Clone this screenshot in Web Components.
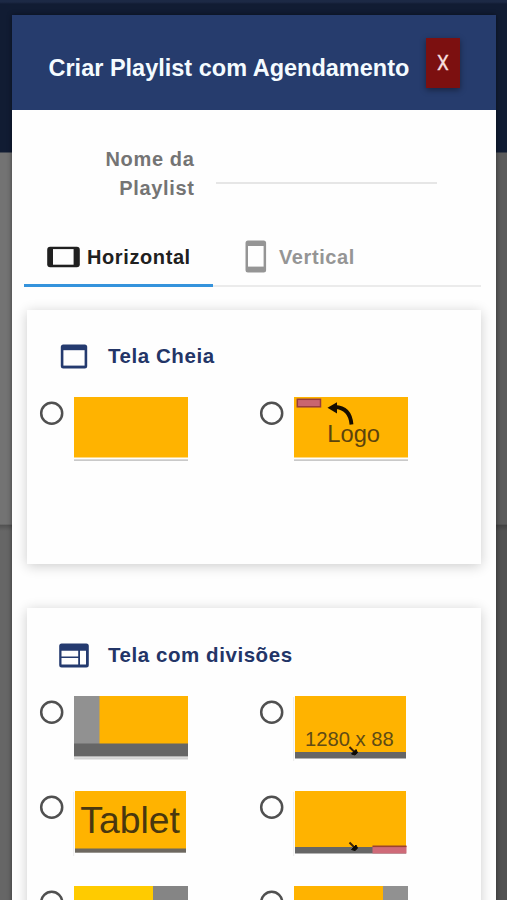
<!DOCTYPE html>
<html lang="pt-BR">
<head>
<meta charset="utf-8">
<title>Criar Playlist</title>
<style>
html,body{margin:0;height:900px;overflow:hidden;font-family:"Liberation Sans",Arial,sans-serif}
</style>
</head>
<body>
<playlist-page>
  <playlist-dialog>
    <dialog-header slot="header" label="Criar Playlist com Agendamento"></dialog-header>
    <name-field>Nome da Playlist</name-field>
    <orientation-tabs></orientation-tabs>
    <layout-card label="Tela Cheia" icon="full" style="height:254px;padding-top:32px">
      <layout-option kind="full"></layout-option>
      <layout-option kind="logo"></layout-option>
    </layout-card>
    <layout-card label="Tela com divisões" icon="split" style="height:420px">
      <layout-option kind="side"></layout-option>
      <layout-option kind="banner"></layout-option>
      <layout-option kind="tablet"></layout-option>
      <layout-option kind="footer"></layout-option>
      <layout-option kind="right"></layout-option>
      <layout-option kind="right2"></layout-option>
    </layout-card>
  </playlist-dialog>
</playlist-page>
<script>
const define = (name, render) => customElements.define(name, class extends HTMLElement {
  constructor() { super(); this.attachShadow({ mode: 'open' }); }
  connectedCallback() { this.shadowRoot.innerHTML = render(this); }
});

define('playlist-page', () => `<style>
:host{display:block;box-sizing:border-box;height:900px;overflow:hidden;padding:15px 11px 0 12px;
background:
linear-gradient(#1c2945 0 2px,#111c33 4px 152px,transparent 153px),
linear-gradient(#0000 524px,#0003 525px,#0000 531px),
linear-gradient(90deg,#0000 60%,#0003 61%),
linear-gradient(#737373 0 525px,#666 525px)}
</style><slot></slot>`);

define('playlist-dialog', () => `<style>
:host{display:flex;flex-direction:column;height:1100px;background:#fefefe;box-shadow:0 0 5px #0007}
main{display:flex;flex-direction:column;padding:0 15px}
</style><slot name="header"></slot><main><slot></slot></main>`);

define('dialog-header', el => `<style>
:host{display:flex;flex:none;height:95px;background:#263c6d;box-sizing:border-box;padding-left:36.5px;align-items:flex-start}
h1{margin:39px 0 0;font-size:23.5px;line-height:28px;font-weight:700;color:#f4fbff;width:377px;white-space:nowrap}
button{margin:23px 0 0;width:34px;height:50px;padding:0;border:0;background:#7c1010;color:#f6dede;font:21px/50px Roboto,sans-serif;box-shadow:0 2px 6px #0006}
span{display:block;transform:scaleX(.9);-webkit-text-stroke:.3px #f6dede}
</style><h1>${el.getAttribute('label')}</h1><button><span>X</span></button>`);

define('name-field', () => `<style>
:host{display:flex;height:116px;color:#747474}
label{width:167.5px;margin-top:35px;padding-left:60px;box-sizing:border-box;text-align:right;font:700 20px/29px "Liberation Sans",sans-serif;letter-spacing:.65px}
input{box-sizing:border-box;width:221px;height:40px;margin:34px 0 0 21.5px;padding:0;border:0;border-bottom:2px solid #e6e6e6;background:none}
</style><label><slot></slot></label><input aria-label="Nome">`);

define('orientation-tabs', () => `<style>
:host{display:flex;margin:0 0 23px -3px;width:457px;height:61px;font:700 20px/24px "Liberation Sans",sans-serif;letter-spacing:.6px}
div{display:flex;box-sizing:border-box;border-bottom:2px solid #ebebeb;height:61px;align-items:center}
.on{width:189px;padding:4px 0 0 23px;color:#202020;border-bottom:3px solid #3593dc}
.off{flex:1;padding:2px 0 0 32px;color:#959595}
svg{display:block;flex:none}
.on svg{margin-right:7px}.off svg{margin-right:12px}
</style>
<div class="on"><svg width="33" height="22" viewBox="0 0 33 22"><rect x=".2" y=".7" width="32.6" height="20.6" rx="3" fill="currentColor"/><rect x="6" y="3.1" width="20.6" height="15.6" fill="#fefefe"/></svg>Horizontal</div>
<div class="off"><svg width="22" height="33" viewBox="0 0 22 33"><rect x=".5" y=".4" width="20.6" height="32" rx="2.5" fill="currentColor"/><rect x="3" y="6" width="15.6" height="20.6" fill="#fefefe"/></svg>Vertical</div>`);

const icons = {
  full: '<rect x="1.8" y=".5" width="26.4" height="24" rx="2.5" fill="#243a6f"/><rect x="4.4" y="6.2" width="21.2" height="15.4" fill="#fefefe"/>',
  split: '<rect x=".2" y=".4" width="29.6" height="24" rx="2.5" fill="#243a6f"/><path d="M2.500 7.800h16.700v5.800H2.500zM2.500 15h16.700v6.400H2.500zM21 7.800h6v13.600h-6z" fill="#fefefe"/>'
};

define('layout-card', el => `<style>
:host{display:block;box-sizing:border-box;width:454px;margin-bottom:44px;padding:33px 0 0;background:#fefefe;box-shadow:0 2px 12px #0003}
header{display:flex;align-items:center;height:28px;padding-left:32px;gap:19px}
svg{flex:none}
h2{margin:-1px 0 0;font-size:20.5px;line-height:26px;letter-spacing:.56px;color:#233567}
section{display:grid;grid-template-columns:220px 220px;grid-auto-rows:95px;padding:26px 0 0 13px}
</style><header><svg width="30" height="25" viewBox="0 0 30 25">${icons[el.getAttribute('icon')]}</svg><h2>${el.getAttribute('label')}</h2></header><section><slot></slot></section>`);

const line = '<rect x="0" y="62.300" width="114" height="1.700" fill="#c9c9c9"/>';
const base = '<rect x="0" y="0" width="114" height="60.500" fill="#ffb300"/>';
const inset = '<rect x="-1" y="1" width="1.2" height="64" fill="#eee"/><rect x="1" y="0" width="111" height="58" fill="#ffb300"/>';
const arrow = '<path d="M55.500 51.500l5 5" stroke="#3a2206" stroke-width="2"/><path d="M57.500 58.500l4.500-4.500 1.500 3.200-2.500 2.300z" fill="#0c0a05" stroke="#0c0a05"/>';
const art = {
  full: base + line,
  logo: base + line + `<rect x="3.300" y="2.300" width="23.200" height="7.500" fill="#c9656f" stroke="#963c3c" stroke-width="1.500"/>
    <path d="M41 10Q56 10.500 57.500 27.500" fill="none" stroke="#160d00" stroke-width="3.800"/><path d="M33.500 10.800L43 5.300v11.200z" fill="#160d00"/>
    <text x="33.300" y="44.500" font-size="23.700" fill="#5c430d">Logo</text>`,
  side: `<rect y="0" width="26" height="49" fill="#919191"/><rect x="25.500" width="88.500" height="48" fill="#ffb300"/><rect y="47.500" width="114" height="13" fill="#666"/><rect y="61.200" width="114" height="2.300" fill="#d2d2d2"/>`,
  banner: inset + `<rect x="1" y="56" width="111" height="6.500" fill="#666"/><text x="11" y="49.500" font-size="20.200" fill="#604b15">1280 x 88</text><g transform="translate(0 -.5)">${arrow}</g>`,
  tablet: inset + `<rect x="1" y="57.500" width="111" height="4.200" fill="#6d6860"/><text x="6.300" y="42" font-size="37.300" fill="#49370f">Tablet</text>`,
  footer: inset + `<rect x="1" y="56" width="111" height="6.500" fill="#666"/><rect x="78.500" y="55" width="34" height="7.500" fill="#cf6a78"/><rect x="78.500" y="54.500" width="34" height="1.600" fill="#9b432f"/>${arrow}`,
  right: '<rect width="80" height="62" fill="#ffcb00"/><rect x="79" width="35" height="62" fill="#858585"/>',
  right2: '<rect width="90" height="62" fill="#ffb300"/><rect x="89" width="25" height="62" fill="#919191"/>'
};

define('layout-option', el => `<style>
:host{display:flex;gap:10px;align-items:flex-start}
svg{display:block;overflow:visible;margin-top:1px}
svg.radio{margin-top:5px}
</style><svg class="radio" width="24" height="24" viewBox="0 0 24 24"><circle cx="11.700" cy="12.300" r="10.500" fill="none" stroke="#505050" stroke-width="2.500"/></svg><svg width="114" height="66" viewBox="0 0 114 66" font-family="Liberation Sans, sans-serif">${art[el.getAttribute('kind')]}</svg>`);
</script>
</body>
</html>
